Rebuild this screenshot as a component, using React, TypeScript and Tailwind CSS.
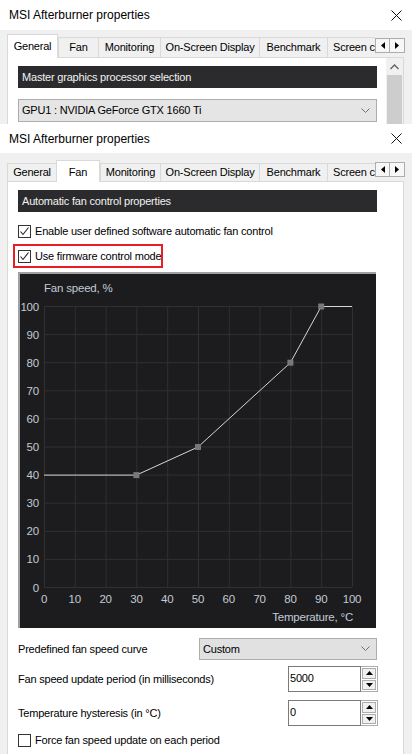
import React from "react";

type Tab = { label: string; width: number };

const tabsGeneral: Tab[] = [
  { label: "General", width: 51 },
  { label: "Fan", width: 40 },
  { label: "Monitoring", width: 62 },
  { label: "On-Screen Display", width: 99 },
  { label: "Benchmark", width: 68 },
  { label: "Screen capture", width: 48 },
];

const tabsFan: Tab[] = [
  { label: "General", width: 49 },
  { label: "Fan", width: 44 },
  { label: "Monitoring", width: 60 },
  { label: "On-Screen Display", width: 99 },
  { label: "Benchmark", width: 68 },
  { label: "Screen capture", width: 48 },
];

const CloseIcon = () => (
  <svg width="11" height="11" viewBox="0 0 11 11">
    <path d="M0.5 0.5L10.5 10.5M10.5 0.5L0.5 10.5" stroke="#111" strokeWidth="1" />
  </svg>
);

const Chevron = () => (
  <svg width="9" height="6" viewBox="0 0 9 6">
    <path d="M0.5 0.5L4.5 4.5L8.5 0.5" fill="none" stroke="#707070" strokeWidth="1" />
  </svg>
);

const TitleBar = ({ height }: { height: string }) => (
  <div className={`${height} bg-white flex items-center justify-between pl-[9px] pr-[10px]`}>
    <span className="text-[12px] tracking-normal text-black">MSI Afterburner properties</span>
    <CloseIcon />
  </div>
);

interface TabRowProps {
  tabs: Tab[];
  selected: number;
  rowHeight: string;
  tabHeight: string;
  selectedHeight: string;
}

const TabRow: React.FC<TabRowProps> = ({ tabs, selected, rowHeight, tabHeight, selectedHeight }) => (
  <div className={`${rowHeight} flex items-end pl-[7px]`}>
    {tabs.map((t, i) => {
      const isSel = i === selected;
      return (
        <div
          key={t.label}
          style={{ width: t.width }}
          className={
            isSel
              ? `${selectedHeight} relative z-10 -mb-px bg-white border border-b-0 border-[#d9d9d9] flex justify-center pt-[3px] overflow-hidden whitespace-nowrap`
              : `${tabHeight} bg-[#f0f0f0] border-t border-l border-[#d9d9d9] flex items-center overflow-hidden whitespace-nowrap ${
                  i === tabs.length - 1 ? "justify-start pl-[5px]" : "justify-center"
                }`
          }
        >
          <span className="text-[11px] text-black">{t.label}</span>
        </div>
      );
    })}
    <div className="flex self-end mb-[4px] h-[15px]">
      <div className="w-[15px] h-full border border-[#adadad] bg-[#f7f7f7] flex items-center justify-center">
        <svg width="4" height="7" viewBox="0 0 4 7">
          <path d="M4 0L0 3.5L4 7Z" fill="#000" />
        </svg>
      </div>
      <div className="w-[15px] h-full border border-l-0 border-[#adadad] bg-[#f7f7f7] flex items-center justify-center">
        <svg width="4" height="7" viewBox="0 0 4 7">
          <path d="M0 0L4 3.5L0 7Z" fill="#000" />
        </svg>
      </div>
    </div>
  </div>
);

const SectionHeader = ({ text }: { text: string }) => (
  <div className="w-[359px] h-[22px] bg-[#2b2b2d] flex items-center pl-[4px]">
    <span className="text-[11px] text-[#f2f2f2]">{text}</span>
  </div>
);

const Checkbox = ({ checked, label }: { checked: boolean; label: string }) => (
  <div className="flex items-center h-[13px]">
    <div className="w-[13px] h-[13px] border border-[#333333] bg-white flex items-center justify-center">
      {checked && (
        <svg width="11" height="11" viewBox="0 0 11 11">
          <path d="M1.5 5.5L4 8.5L9.5 1.5" fill="none" stroke="#222" strokeWidth="1.1" />
        </svg>
      )}
    </div>
    <span className="ml-[4px] text-[11px] text-black leading-none">{label}</span>
  </div>
);

const SpinBox = ({ value }: { value: string }) => (
  <div className="flex h-[26px]">
    <div className="w-[73px] h-full border border-[#7a7a7a] bg-white pl-[1px] pt-[3px]">
      <span className="text-[11px] text-black leading-none">{value}</span>
    </div>
    <div className="w-[17px] h-full flex flex-col border border-l-0 border-[#adadad] bg-white p-px gap-px">
      <div className="flex-1 bg-[#f0f0f0] border border-[#adadad] flex items-center justify-center">
        <svg width="7" height="4" viewBox="0 0 7 4">
          <path d="M0 4L3.5 0L7 4Z" fill="#000" />
        </svg>
      </div>
      <div className="flex-1 bg-[#f0f0f0] border border-[#adadad] flex items-center justify-center">
        <svg width="7" height="4" viewBox="0 0 7 4">
          <path d="M0 0L3.5 4L7 0Z" fill="#000" />
        </svg>
      </div>
    </div>
  </div>
);

// chart geometry, inside the frame (frame interior starts at 20,273 on the page)
const X0 = 24;
const XSTEP = 3.08;
const Y0 = 313;
const YSTEP = 2.81;
const px = (t: number) => X0 + t * XSTEP;
const py = (s: number) => Y0 - s * YSTEP;

const curve = [
  [0, 40],
  [30, 40],
  [50, 50],
  [80, 80],
  [90, 100],
  [100, 100],
];
const handles = [
  [30, 40],
  [50, 50],
  [80, 80],
  [90, 100],
];

const FanChart = () => {
  const ticks = [0, 10, 20, 30, 40, 50, 60, 70, 80, 90, 100];
  const labelColor = "#c3cad4";
  return (
    <div className="w-[358px] h-[356px] border-t-2 border-l-2 border-[#a0a0a0] bg-[#1c1c1e]">
      <svg
        width="356"
        height="354"
        viewBox="0 0 356 354"
        style={{ fontFamily: "'Liberation Sans', Arial, sans-serif", letterSpacing: "-0.2px" }}
      >
        {ticks.map((t) => (
          <line key={"v" + t} x1={px(t) + 0.5} y1={py(100)} x2={px(t) + 0.5} y2={py(0)} stroke="#303033" strokeWidth="1" />
        ))}
        {ticks.map((t) => (
          <line key={"h" + t} x1={px(0)} y1={py(t) + 0.5} x2={px(100)} y2={py(t) + 0.5} stroke="#303033" strokeWidth="1" />
        ))}
        <text x={24} y={18} fontSize="11.5" fill={labelColor}>
          Fan speed, %
        </text>
        {ticks.map((t) => (
          <text key={"yl" + t} x={19} y={py(t) + 4.5} fontSize="11.5" fill={labelColor} textAnchor="end">
            {t}
          </text>
        ))}
        {ticks.map((t) => (
          <text key={"xl" + t} x={px(t)} y={329} fontSize="11.5" fill={labelColor} textAnchor="middle">
            {t}
          </text>
        ))}
        <text x={333} y={347} fontSize="11.5" fill={labelColor} textAnchor="end">
          Temperature, °C
        </text>
        <polyline
          points={curve.map(([t, s]) => `${px(t)},${py(s) + 0.5}`).join(" ")}
          fill="none"
          stroke="#d6d6d6"
          strokeWidth="1"
        />
        {handles.map(([t, s]) => (
          <rect key={"p" + t} x={px(t) - 3} y={py(s) - 2.5} width="6" height="6" fill="#787878" />
        ))}
      </svg>
    </div>
  );
};

export default function App() {
  return (
    <div className="w-[412px] h-[754px] overflow-hidden bg-[#f0f0f0] text-black font-['Liberation_Sans',Arial,sans-serif] text-[11px] tracking-[-0.2px]">
      {/* Window 1 (General tab), cut off */}
      <div className="h-[124px] overflow-hidden">
        <TitleBar height="h-[30px]" />
        <div className="pt-[4px]">
          <TabRow tabs={tabsGeneral} selected={0} rowHeight="h-[23px]" tabHeight="h-[20px]" selectedHeight="h-[24px]" />
          <div className="ml-[7px] w-[397px] h-[200px] border border-[#d9d9d9] bg-white flex">
            <div className="flex-1 pl-[10px] pt-[8px]">
              <SectionHeader text="Master graphics processor selection" />
              <div className="mt-[11px] w-[359px] h-[23px] border border-[#adadad] bg-[#e5e5e5] flex items-center justify-between pl-[3px] pr-[6px]">
                <span className="text-[11px]">GPU1 : NVIDIA GeForce GTX 1660 Ti</span>
                <Chevron />
              </div>
            </div>
            <div className="w-[17px] bg-[#f0f0f0] flex flex-col">
              <div className="h-[17px] flex items-center justify-center">
                <svg width="9" height="6" viewBox="0 0 9 6">
                  <path d="M0.5 5L4.5 1L8.5 5" fill="none" stroke="#606060" strokeWidth="1.3" />
                </svg>
              </div>
              <div className="flex-1 mx-px bg-[#cdcdcd]" />
            </div>
          </div>
        </div>
      </div>

      {/* Window 2 (Fan tab) */}
      <div className="h-[630px] overflow-hidden">
        <TitleBar height="h-[29px]" />
        <div className="pt-[7px]">
          <TabRow tabs={tabsFan} selected={1} rowHeight="h-[21px]" tabHeight="h-[18px]" selectedHeight="h-[22px]" />
          <div className="ml-[7px] w-[397px] h-[600px] border border-[#d9d9d9] bg-white pl-[10px] pt-[8px]">
            <SectionHeader text="Automatic fan control properties" />
            <div className="mt-[13px]">
              <Checkbox checked label="Enable user defined software automatic fan control" />
            </div>
            <div className="mt-[12px] relative">
              <Checkbox checked label="Use firmware control mode" />
              <div className="absolute left-[-5px] top-[-6px] w-[150px] h-[24px] border-2 border-[#ec1c24]" />
            </div>
            <div className="mt-[9px]">
              <FanChart />
            </div>
            <div className="mt-[10px] flex items-center h-[22px] w-[359px]">
              <span className="text-[11px] w-[181px]">Predefined fan speed curve</span>
              <div className="w-[178px] h-[22px] border border-[#adadad] bg-[#e1e1e1] flex items-center justify-between pl-[3px] pr-[6px]">
                <span className="text-[11px]">Custom</span>
                <Chevron />
              </div>
            </div>
            <div className="mt-[6px] flex items-center w-[360px] justify-between">
              <span className="text-[11px]">Fan speed update period (in milliseconds)</span>
              <SpinBox value="5000" />
            </div>
            <div className="mt-[8px] flex items-center w-[360px] justify-between">
              <span className="text-[11px]">Temperature hysteresis (in °C)</span>
              <SpinBox value="0" />
            </div>
            <div className="mt-[8px]">
              <Checkbox checked={false} label="Force fan speed update on each period" />
            </div>
          </div>
        </div>
      </div>
    </div>
  );
}
